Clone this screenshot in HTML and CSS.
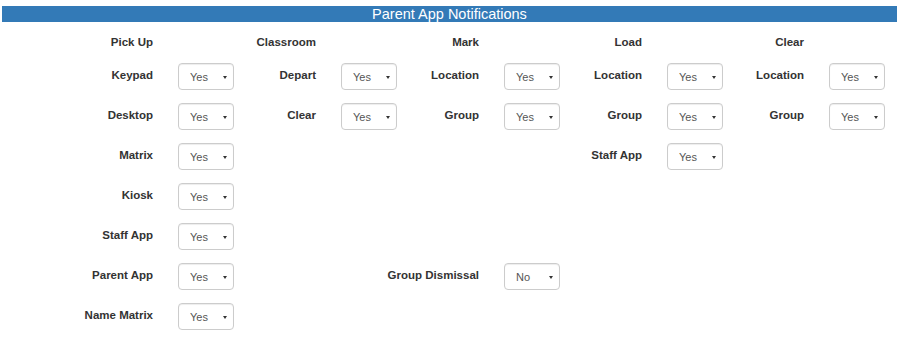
FILE: index.html
```html
<!DOCTYPE html>
<html>
<head>
    <title>Parent App Notifications</title>
    <link rel="stylesheet" href="styles.css">
</head>
<body>
    <div class="section-title">Parent App Notifications</div>

    <div class="settings">
        <div class="form-row heading-row">
            <div class="field-label">Pick Up</div>
            <div class="field-label g2">Classroom</div>
            <div class="field-label g3">Mark</div>
            <div class="field-label g4">Load</div>
            <div class="field-label g5">Clear</div>
        </div>

        <div class="form-row">
            <div class="field-label">Keypad</div>
            <div class="select-wrap"><select><option>Yes</option><option>No</option></select></div>
            <div class="field-label">Depart</div>
            <div class="select-wrap"><select><option>Yes</option><option>No</option></select></div>
            <div class="field-label">Location</div>
            <div class="select-wrap"><select><option>Yes</option><option>No</option></select></div>
            <div class="field-label">Location</div>
            <div class="select-wrap"><select><option>Yes</option><option>No</option></select></div>
            <div class="field-label">Location</div>
            <div class="select-wrap"><select><option>Yes</option><option>No</option></select></div>
        </div>

        <div class="form-row">
            <div class="field-label">Desktop</div>
            <div class="select-wrap"><select><option>Yes</option><option>No</option></select></div>
            <div class="field-label">Clear</div>
            <div class="select-wrap"><select><option>Yes</option><option>No</option></select></div>
            <div class="field-label">Group</div>
            <div class="select-wrap"><select><option>Yes</option><option>No</option></select></div>
            <div class="field-label">Group</div>
            <div class="select-wrap"><select><option>Yes</option><option>No</option></select></div>
            <div class="field-label">Group</div>
            <div class="select-wrap"><select><option>Yes</option><option>No</option></select></div>
        </div>

        <div class="form-row">
            <div class="field-label">Matrix</div>
            <div class="select-wrap"><select><option>Yes</option><option>No</option></select></div>
            <div class="field-label g4">Staff App</div>
            <div class="select-wrap"><select><option>Yes</option><option>No</option></select></div>
        </div>

        <div class="form-row">
            <div class="field-label">Kiosk</div>
            <div class="select-wrap"><select><option>Yes</option><option>No</option></select></div>
        </div>

        <div class="form-row">
            <div class="field-label">Staff App</div>
            <div class="select-wrap"><select><option>Yes</option><option>No</option></select></div>
        </div>

        <div class="form-row">
            <div class="field-label">Parent App</div>
            <div class="select-wrap"><select><option>Yes</option><option>No</option></select></div>
            <div class="field-label wide g3">Group Dismissal</div>
            <div class="select-wrap"><select><option>No</option><option>Yes</option></select></div>
        </div>

        <div class="form-row">
            <div class="field-label">Name Matrix</div>
            <div class="select-wrap"><select><option>Yes</option><option>No</option></select></div>
        </div>
    </div>
</body>
</html>
```

FILE: styles.css
```css
body {
    margin: 0;
    background-color: #FFFFFF;
    font-family: "Liberation Sans", Arial, sans-serif;
    color: #333333;
}

.section-title {
    margin: 6px 3px 0 2px;
    height: 16px;
    line-height: 16px;
    background-color: #337AB7;
    color: #FFFFFF;
    font-size: 14.5px;
    text-align: center;
}

.settings {
    margin-top: 12px;
}

.form-row {
    display: grid;
    grid-template-columns: 178px 56px 107px 56px 107px 56px 107px 56px 106px 56px;
    height: 27px;
    margin-bottom: 13px;
}

.heading-row {
    height: 16px;
}

.field-label {
    padding: 4px 25px 0 0;
    line-height: 16px;
    font-size: 11.5px;
    font-weight: bold;
    text-align: right;
    white-space: nowrap;
}

.heading-row .field-label {
    padding-top: 0;
}

.g2 { grid-column-start: 3; }
.g3 { grid-column-start: 5; }
.g4 { grid-column-start: 7; }
.g5 { grid-column-start: 9; }

.field-label.wide {
    grid-column: 4 / 6;
}

.select-wrap {
    position: relative;
    height: 27px;
}

.select-wrap select {
    appearance: none;
    -webkit-appearance: none;
    width: 56px;
    height: 27px;
    margin: 0;
    padding: 0 0 0 11px;
    border: 1px solid #CCCCCC;
    border-radius: 4px;
    box-shadow: inset 0 1px 1px rgba(0, 0, 0, 0.075);
    background-color: #FFFFFF;
    color: #555555;
    font-family: "Liberation Sans", Arial, sans-serif;
    font-size: 11px;
    outline: none;
}

/* small caret in place of the native arrow */
.select-wrap::after {
    content: "";
    position: absolute;
    top: 13px;
    left: 45px;
    border-left: 2.5px solid transparent;
    border-right: 2.5px solid transparent;
    border-top: 3.5px solid #333333;
    pointer-events: none;
}
```
